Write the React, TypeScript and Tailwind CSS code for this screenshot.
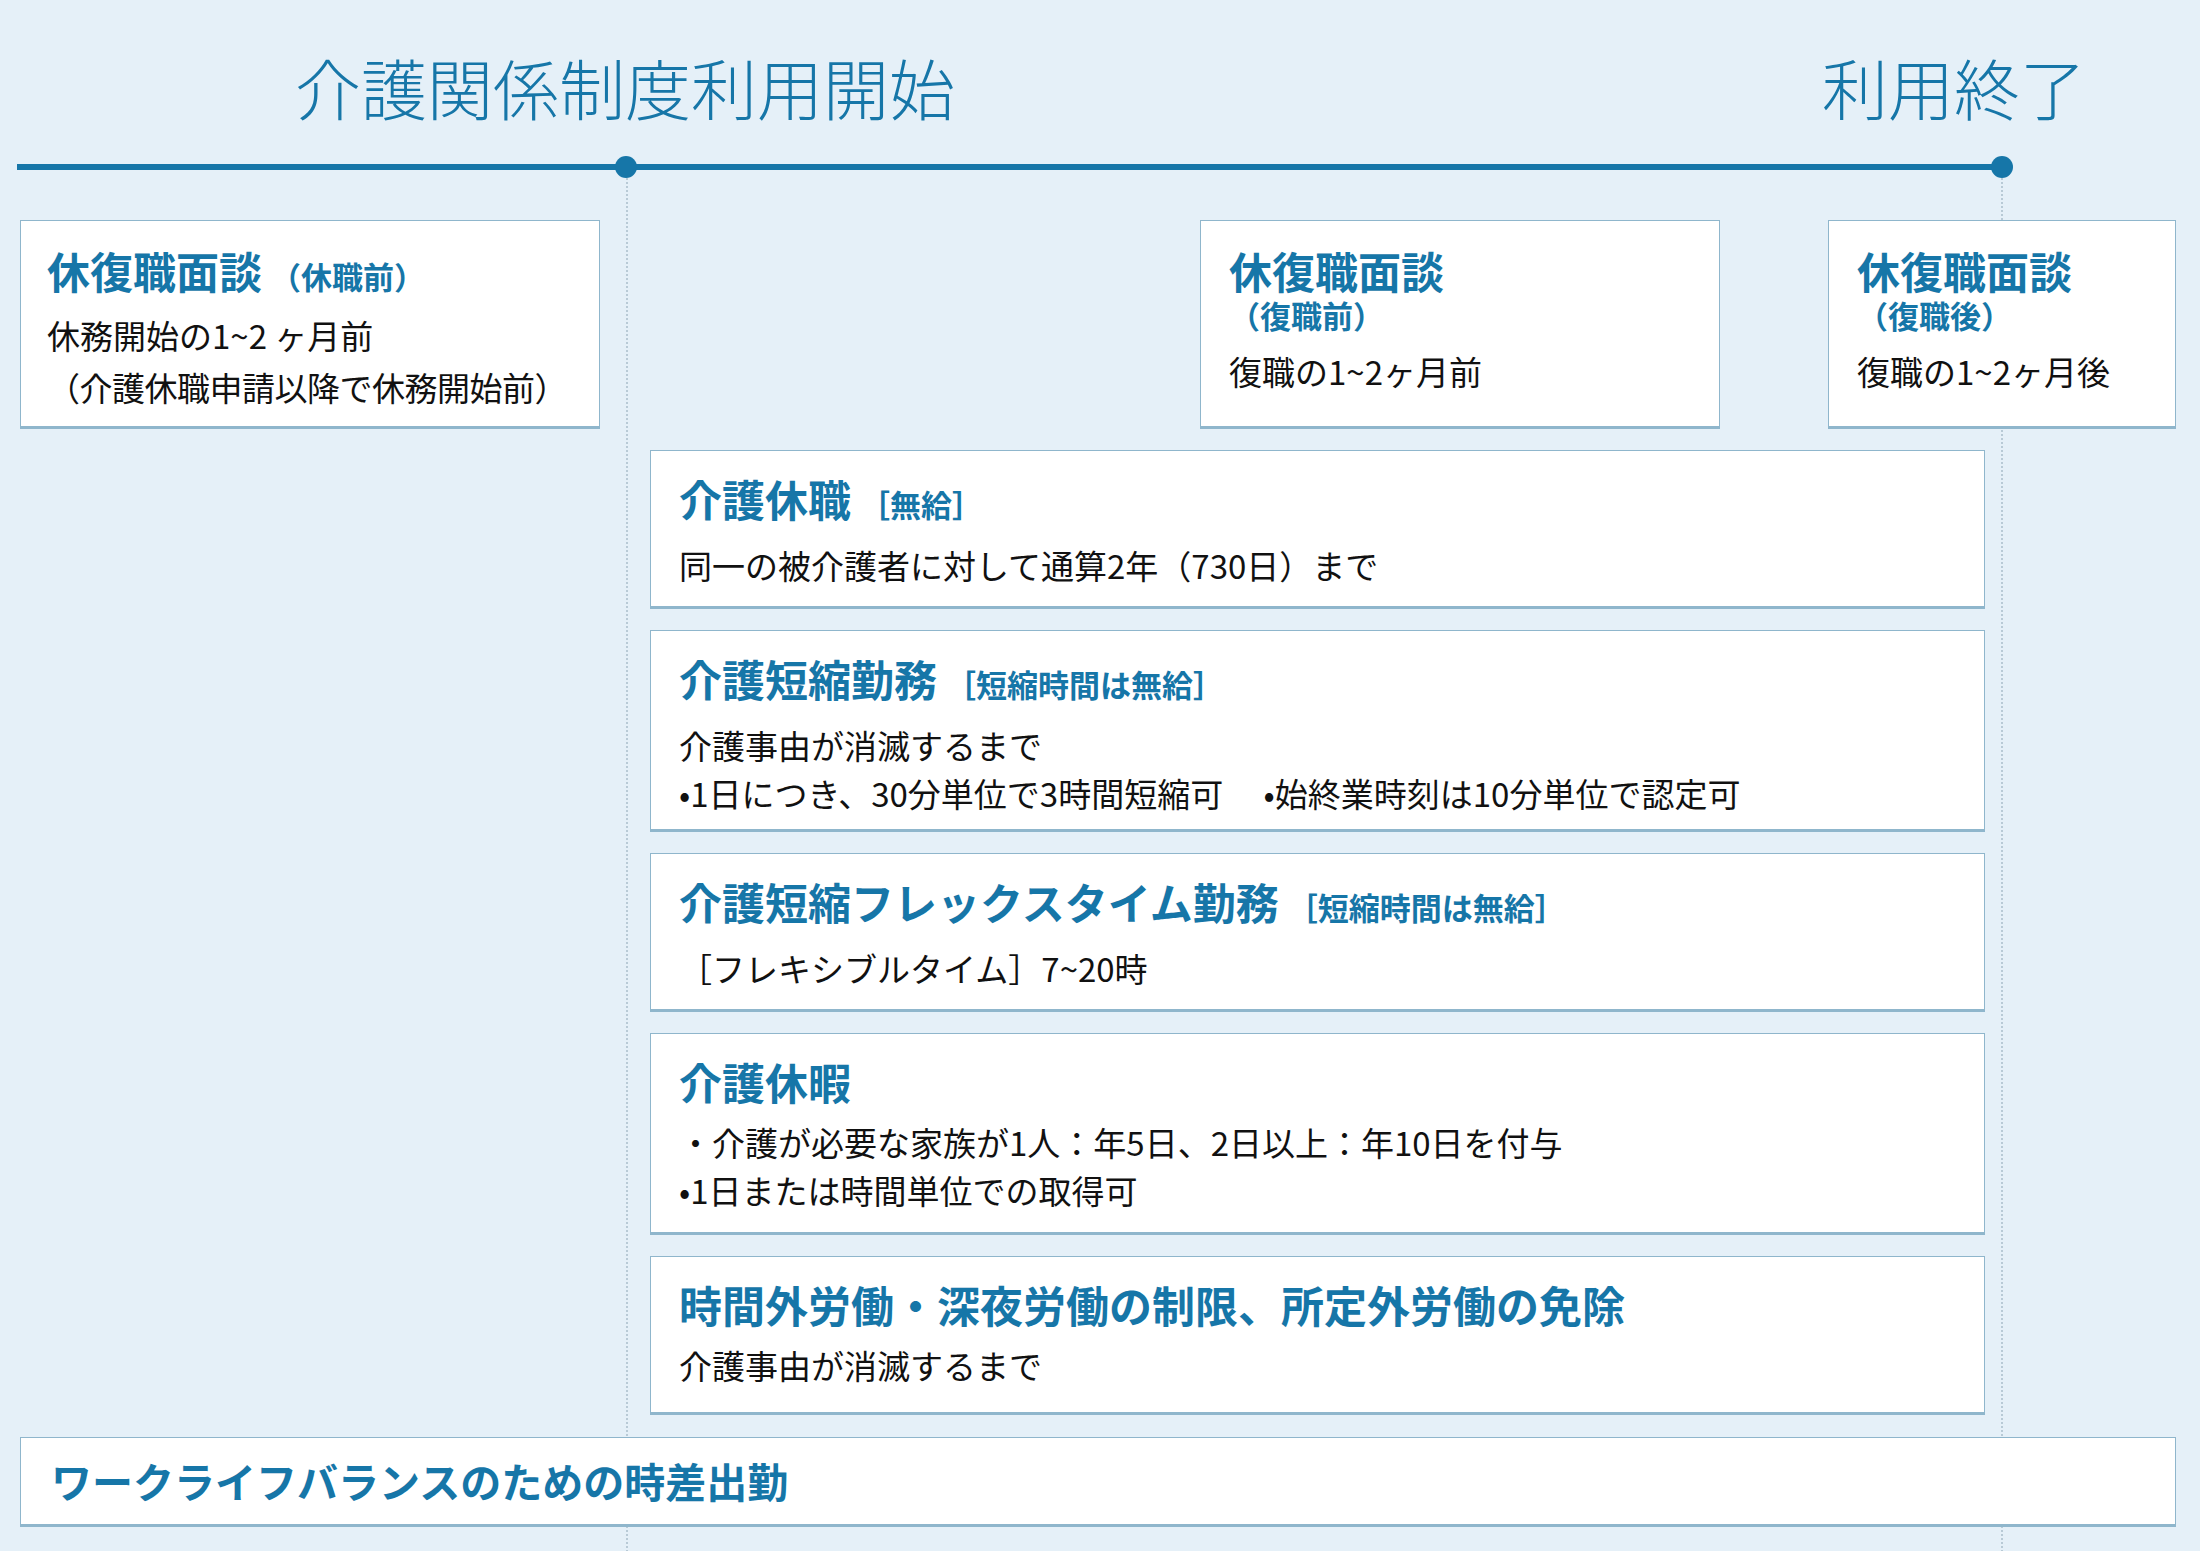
import React from "react";

const F = { fontFamily: '"Noto Sans CJK JP", "Noto Sans", sans-serif' };

function Title({ main, sub }: { main: string; sub?: string }) {
  return (
    <div className="text-[#1676a8] font-bold text-[43px] leading-[50px]">
      {main}
      {sub && <span className="text-[31px] ml-2">{sub}</span>}
    </div>
  );
}

function Big({ main, sub, lines, h }: { main: string; sub?: string; lines: string[]; h: string }) {
  return (
    <div className={`bg-white border border-[#8fb6cc] border-b-[3px] px-[28px] pt-[22px] ${h}`}>
      <Title main={main} sub={sub} />
      <div className="mt-[12px] text-[33px] leading-[48px] text-[#111]">
        {lines.map((l, i) => (
          <div key={i} className="whitespace-pre">{l}</div>
        ))}
      </div>
    </div>
  );
}

export default function App() {
  return (
    <div style={F} className="relative w-[2200px] h-[1551px] bg-[#e5f0f8] overflow-hidden">
      <div className="absolute left-[626px] top-[167px] h-[1400px] border-l-2 border-dotted border-[#b8cad6]" />
      <div className="absolute left-[2001px] top-[167px] h-[1400px] border-l-2 border-dotted border-[#b8cad6]" />

      <div className="relative flex h-[120px] pt-[46px] text-[#1676a8] text-[66px] leading-[80px] font-light">
        <div className="ml-[295px]">介護関係制度利用開始</div>
        <div className="ml-auto mr-[114px]">利用終了</div>
      </div>

      <div className="relative ml-[17px] w-[1985px] h-[6px] bg-[#1676a8] mt-[44px]">
        <div className="absolute left-[598px] top-[-8px] w-[22px] h-[22px] rounded-full bg-[#1676a8]" />
        <div className="absolute right-[-11px] top-[-8px] w-[22px] h-[22px] rounded-full bg-[#1676a8]" />
      </div>

      <div className="relative flex mt-[50px] h-[209px]">
        <div className="ml-[20px] w-[580px] bg-white border border-[#8fb6cc] border-b-[3px] px-[26px] pt-[24px]">
          <Title main="休復職面談" sub="（休職前）" />
          <div className="mt-[8px] text-[33px] leading-[52px] text-[#111]">
            <div>休務開始の1~2 ヶ月前</div>
            <div className="tracking-[-0.5px]">（介護休職申請以降で休務開始前）</div>
          </div>
        </div>
        <div className="ml-[600px] w-[520px] bg-white border border-[#8fb6cc] border-b-[3px] px-[28px] pt-[24px]">
          <Title main="休復職面談" />
          <div className="text-[#1676a8] font-bold text-[31px] leading-[40px]">（復職前）</div>
          <div className="mt-[12px] text-[33px] leading-[48px] text-[#111]">復職の1~2ヶ月前</div>
        </div>
        <div className="ml-[108px] w-[348px] bg-white border border-[#8fb6cc] border-b-[3px] px-[28px] pt-[24px]">
          <Title main="休復職面談" />
          <div className="text-[#1676a8] font-bold text-[31px] leading-[40px]">（復職後）</div>
          <div className="mt-[12px] text-[33px] leading-[48px] text-[#111]">復職の1~2ヶ月後</div>
        </div>
      </div>

      <div className="relative ml-[650px] w-[1335px] mt-[21px] flex flex-col gap-[21px]">
        <Big h="h-[159px]" main="介護休職" sub="［無給］" lines={["同一の被介護者に対して通算2年（730日）まで"]} />
        <Big h="h-[202px]" main="介護短縮勤務" sub="［短縮時間は無給］" lines={["介護事由が消滅するまで", "•1日につき、30分単位で3時間短縮可　 •始終業時刻は10分単位で認定可"]} />
        <Big h="h-[159px]" main="介護短縮フレックスタイム勤務" sub="［短縮時間は無給］" lines={["［フレキシブルタイム］7~20時"]} />
        <Big h="h-[202px]" main="介護休暇" lines={["・介護が必要な家族が1人：年5日、2日以上：年10日を付与", "•1日または時間単位での取得可"]} />
        <Big h="h-[159px]" main="時間外労働・深夜労働の制限、所定外労働の免除" lines={["介護事由が消滅するまで"]} />
      </div>

      <div className="relative ml-[20px] w-[2156px] h-[90px] mt-[22px] bg-white border border-[#8fb6cc] border-b-[3px] px-[30px] flex items-center">
        <div className="text-[#1676a8] font-bold text-[41px]">ワークライフバランスのための時差出勤</div>
      </div>
    </div>
  );
}
